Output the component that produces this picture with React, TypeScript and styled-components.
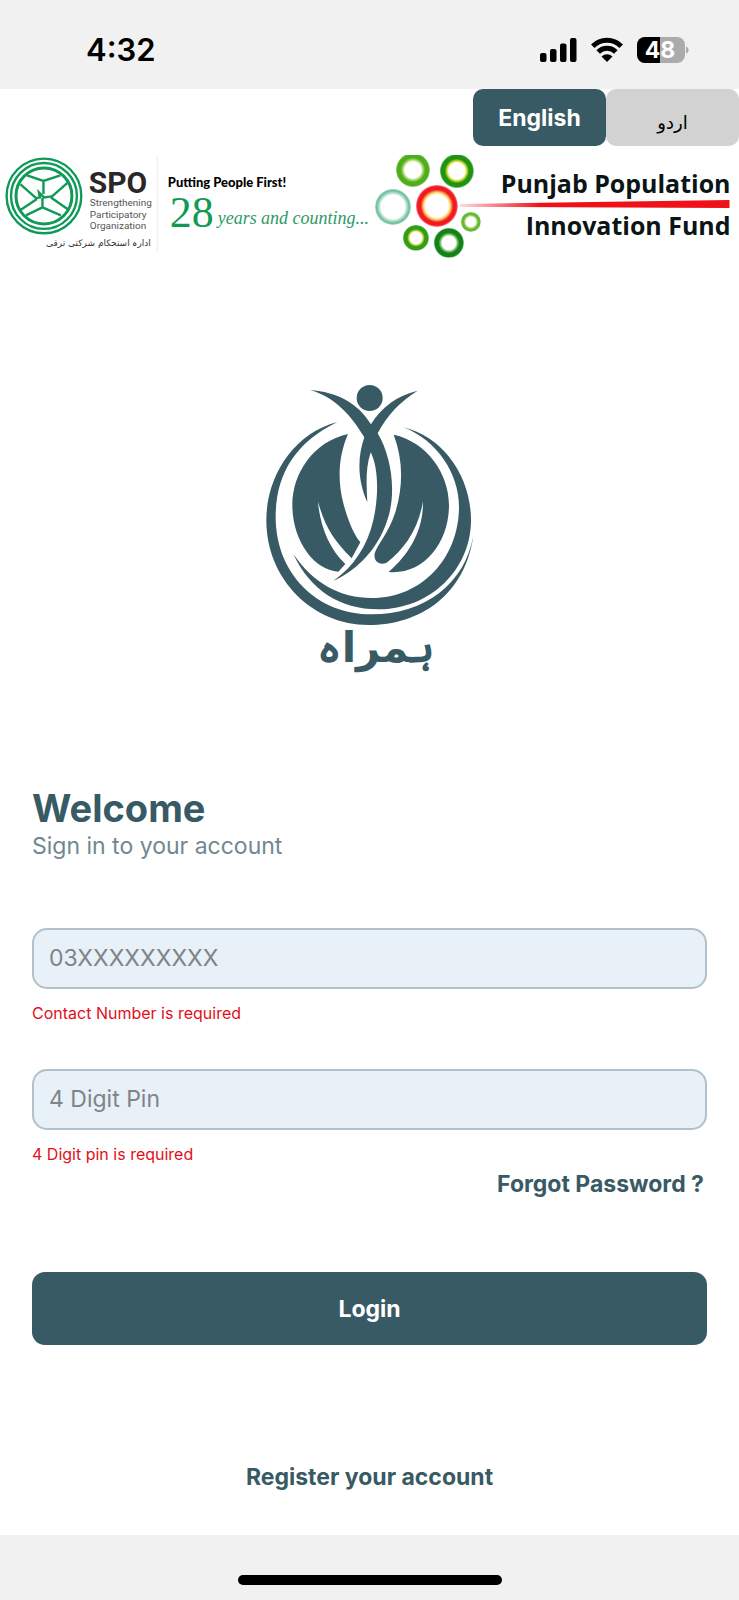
import React, { useState } from "react";
import styled, { createGlobalStyle } from "styled-components";

const teal = "#385a64";
const urduFont = '"DejaVu Sans", sans-serif';

const GlobalStyle = createGlobalStyle`
  *, *::before, *::after { box-sizing: border-box; }
  body {
    margin: 0;
    background: #ffffff;
    font-family: Inter, "Liberation Sans", sans-serif;
    color: ${teal};
  }
  button, input { font-family: inherit; }
`;

const Screen = styled.div`
  min-height: 100vh;
  display: flex;
  flex-direction: column;
`;

const StatusBar = styled.header`
  display: flex;
  align-items: center;
  justify-content: space-between;
  height: 89px;
  padding: 10px 50px 0 86px;
  background: #f1f1f1;
  color: #000000;
`;

const Clock = styled.time`
  font-size: 31px;
  line-height: 40px;
  font-weight: 600;
`;

const StatusIcons = styled.div`
  display: flex;
  align-items: center;
  gap: 14px;
`;

const LanguageTabs = styled.div`
  display: flex;
  justify-content: flex-end;
`;

const LanguageButton = styled.button<{ $active: boolean }>`
  width: 18%;
  height: 57px;
  padding: 0;
  border: 0;
  border-radius: 10px;
  background: ${(p) => (p.$active ? teal : "#d2d2d2")};
  color: ${(p) => (p.$active ? "#ffffff" : "#000000")};
  font-size: 23px;
  font-weight: ${(p) => (p.$active ? 700 : 400)};
  cursor: pointer;

  &:lang(ur) {
    padding-top: 10px;
    font-family: ${urduFont};
    font-size: 18px;
  }
`;

const Partners = styled.div`
  display: flex;
  margin-top: 4px;

  & > svg { flex: 1; min-width: 0; height: auto; }
`;

const EmblemWrap = styled.div`
  display: flex;
  justify-content: center;
  margin-top: 110px;
`;

const Form = styled.form`
  flex: 1;
  display: flex;
  flex-direction: column;
  margin-top: 104px;
  padding: 0 32px 44px;
`;

const Title = styled.h1`
  margin: 0;
  font-size: 38px;
  line-height: 48px;
  font-weight: 700;
`;

const Subtitle = styled.p`
  margin: 0 0 68px;
  font-size: 23px;
  line-height: 28px;
  color: #718890;
`;

const Field = styled.div<{ $last?: boolean }>`
  display: flex;
  flex-direction: column;
  margin-bottom: ${(p) => (p.$last ? 6 : 46)}px;
`;

const TextInput = styled.input`
  width: 100%;
  height: 61px;
  padding: 0 15px;
  border: 2px solid #b1c1c9;
  border-radius: 15px;
  background: #e8f0f8;
  color: ${teal};
  font-size: 23px;
  outline: none;

  &::placeholder { color: #7f8488; opacity: 1; }
`;

const ErrorText = styled.p`
  margin: 14px 0 0;
  font-size: 16px;
  line-height: 20px;
  color: #e20f1a;
`;

const TextLink = styled.a<{ $align: "flex-end" | "center" }>`
  align-self: ${(p) => p.$align};
  padding: 0 3px;
  color: ${teal};
  font-size: 23px;
  line-height: 28px;
  font-weight: 700;
  text-decoration: none;
`;

const LoginButton = styled.button`
  height: 73px;
  margin: 74px 0 118px;
  padding: 2px 0 0;
  border: 0;
  border-radius: 13px;
  background: ${teal};
  color: #ffffff;
  font-size: 23px;
  font-weight: 700;
  cursor: pointer;
`;

const HomeArea = styled.footer`
  display: flex;
  justify-content: center;
  align-items: flex-end;
  height: 65px;
  padding-bottom: 15px;
  background: #f1f1f1;
`;

const HomeIndicator = styled.div`
  width: 264px;
  height: 10px;
  border-radius: 5px;
  background: #000000;
`;

const SignalIcon = () => (
  <svg width="38" height="26" viewBox="0 0 38 26" role="img" aria-label="Signal">
    <rect x="1" y="16" width="6.500" height="9" rx="2" />
    <rect x="11" y="12" width="6.500" height="13" rx="2" />
    <rect x="21" y="6.500" width="6.500" height="18.500" rx="2" />
    <rect x="31" y="1" width="6.500" height="24" rx="2" />
  </svg>
);

const WifiIcon = () => (
  <svg width="32" height="26" viewBox="0 0 32 26" role="img" aria-label="Wi-Fi">
    <g fill="none" stroke="#000" strokeWidth="5">
      <path d="M1.800 9.200a20.200 20.200 0 0 1 28.400 0" />
      <path d="M7.200 15a12.400 12.400 0 0 1 17.600 0" />
    </g>
    <path d="M16 25l-5.500-5.400a7.800 7.800 0 0 1 11 0z" />
  </svg>
);

const BatteryIcon = () => (
  <svg width="52" height="26" viewBox="0 0 52 26" role="img" aria-label="Battery">
    <rect width="48" height="26" rx="8" fill="#ababab" />
    <path d="M23 0v26H8a8 8 0 0 1-8-8V8a8 8 0 0 1 8-8z" fill="#000" />
    <path d="M49 9.500c3.500 1 3.500 6 0 7z" fill="#ababab" />
    <text x="23" y="21" textAnchor="middle" fontFamily="Inter, sans-serif" fontSize="23" fontWeight="700" fill="#fff">
      48
    </text>
  </svg>
);

const SpoLogo = () => (
  <svg viewBox="0 0 370 110" role="img" aria-label="SPO">
    <g fill="none" stroke="#109a57" strokeWidth="2.4">
      <circle cx="44" cy="46" r="37.4" />
      <circle cx="44" cy="46" r="33" />
      <circle cx="44" cy="46" r="28" strokeWidth="3" />
      <path d="M27 25.500l16.500 5.500 17-5.500M43.500 31v13M20.500 34.500L37 49M67.500 33L51 47.500M37 49L19 61M51 47.500L69 60M42.500 48v10M26 65.500l16.500-8 18.500 8" />
      <path d="M35 48.500l5-1-1-5 5 5 8-1" />
    </g>
    <text x="89" y="43" fontFamily='Roboto, "Liberation Sans", sans-serif' fontSize="30" fontWeight="700" fill="#2b2728">SPO</text>
    <g fontFamily='Roboto, "Liberation Sans", sans-serif' fontSize="10" fill="#555">
      <text x="90" y="56">Strengthening</text>
      <text x="90" y="68">Participatory</text>
      <text x="90" y="79">Organization</text>
    </g>
    <text x="151" y="96" direction="rtl" lang="ur" fontFamily={urduFont} fontSize="9" fill="#333">ادارہ استحکام شرکتی ترقی</text>
    <path d="M157.500 5v98" stroke="#ececec" />
    <text x="168" y="37" fontFamily="Lato, sans-serif" fontSize="13" fontWeight="900" fill="#000">Putting People First!</text>
    <text x="170" y="77" fontFamily='"Liberation Serif", serif' fontSize="44" fill="#109a57">28</text>
    <text x="218" y="74" fontFamily='"Liberation Serif", serif' fontSize="18" fontStyle="italic" fill="#2d9a66">years and counting...</text>
  </svg>
);

type RingProps = { id: string; hole: number; inner: string; outer: string };

const RingGradient = ({ id, hole, inner, outer }: RingProps) => (
  <radialGradient id={id}>
    <stop offset={hole - 0.1} stopColor="#fff" />
    <stop offset={hole} stopColor={inner} />
    <stop offset={hole + 0.14} stopColor={outer} />
    <stop offset="0.92" stopColor={outer} />
    <stop offset="1" stopColor={outer} stopOpacity="0.5" />
  </radialGradient>
);

const PpifLogo = () => (
  <svg viewBox="0 0 370 110" role="img" aria-label="Punjab Population Innovation Fund">
    <defs>
      <RingGradient id="lime" hole={0.58} inner="#b5dc7c" outer="#4fae1c" />
      <RingGradient id="green" hole={0.58} inner="#d5dc3a" outer="#1f9410" />
      <RingGradient id="mint" hole={0.76} inner="#bfe3d2" outer="#6cc09c" />
      <RingGradient id="red" hole={0.64} inner="#ffd668" outer="#f21a22" />
      <RingGradient id="small" hole={0.58} inner="#c9e7a0" outer="#66ba34" />
      <RingGradient id="olive" hole={0.54} inner="#e2dc44" outer="#2f9e18" />
      <RingGradient id="dark" hole={0.56} inner="#8cc66c" outer="#12821a" />
      <linearGradient id="swoosh">
        <stop offset="0" stopColor="#f01018" stopOpacity="0.15" />
        <stop offset="0.3" stopColor="#f01018" />
      </linearGradient>
      <clipPath id="frame">
        <rect y="5" width="370" height="105" />
      </clipPath>
    </defs>
    <g clipPath="url(#frame)">
      <circle cx="43" cy="20" r="17" fill="url(#lime)" />
      <circle cx="87" cy="21" r="17" fill="url(#green)" />
      <circle cx="23" cy="57" r="18" fill="url(#mint)" />
      <circle cx="67" cy="56" r="21" fill="url(#red)" />
      <circle cx="101" cy="72" r="10" fill="url(#small)" />
      <circle cx="46" cy="88" r="13" fill="url(#olive)" />
      <circle cx="79" cy="93" r="15" fill="url(#dark)" />
    </g>
    <path d="M90 54L360 50v8L90 57z" fill="url(#swoosh)" />
    <g fontFamily='"Open Sans", sans-serif' fontSize="25" fontWeight="700" fill="#0b1416" textAnchor="end">
      <text x="361" y="43">Punjab Population</text>
      <text x="361" y="85">Innovation Fund</text>
    </g>
  </svg>
);

const Emblem = () => (
  <svg width="240" height="310" viewBox="0 0 720 930" fill={teal} role="img" aria-label="ہمراہ">
    <circle cx="359" cy="84" r="39" />
    <path d="M180 60C260 66 323 98 363 163C395 110 440 78 503 62C450 95 412 135 383 190C425 260 440 370 412 450C385 535 325 598 250 633C310 590 352 530 370 450C388 370 384 290 362 247C345 300 350 350 352 397C322 330 322 262 343 202C300 130 250 80 180 60Z" />
    <path d="M294 192C265 260 262 330 280 400C295 455 310 490 331 517L305 565C250 510 225 470 204 395C210 470 240 540 286 582L265 605C190 600 127 510 127 405C127 310 190 215 294 192Z" />
    <path d="M431 194C460 270 460 350 435 430C415 490 385 520 374 550C370 575 388 587 410 578C460 540 505 480 519 394C520 480 480 550 416 606C520 615 597 520 597 405C597 310 530 215 431 194Z" />
    <path d="M262 156C130 190 49 320 49 450C49 630 190 765 355 765C510 765 645 675 670 497C645 640 525 733 365 733C200 733 77 610 77 440C77 320 130 220 262 156Z" />
    <path d="M460 172C580 200 663 320 663 450C663 600 540 718 385 718C270 718 180 660 130 552C190 640 270 684 365 684C520 684 627 560 627 410C627 310 560 210 460 172Z" />
    <text x="378" y="876" textAnchor="middle" direction="rtl" lang="ur" fontFamily={urduFont} fontSize="126" fontWeight="700">ہمراہ</text>
  </svg>
);

export default function App() {
  const [language, setLanguage] = useState<"en" | "ur">("en");
  return (
    <>
      <GlobalStyle />
      <Screen>
        <StatusBar>
          <Clock>4:32</Clock>
          <StatusIcons>
            <SignalIcon />
            <WifiIcon />
            <BatteryIcon />
          </StatusIcons>
        </StatusBar>
        <LanguageTabs>
          <LanguageButton type="button" $active={language === "en"} onClick={() => setLanguage("en")}>
            English
          </LanguageButton>
          <LanguageButton type="button" lang="ur" $active={language === "ur"} onClick={() => setLanguage("ur")}>
            اردو
          </LanguageButton>
        </LanguageTabs>
        <Partners>
          <SpoLogo />
          <PpifLogo />
        </Partners>
        <EmblemWrap>
          <Emblem />
        </EmblemWrap>
        <Form onSubmit={(e) => e.preventDefault()}>
          <Title>Welcome</Title>
          <Subtitle>Sign in to your account</Subtitle>
          <Field>
            <TextInput type="tel" placeholder="03XXXXXXXXX" aria-label="Contact Number" aria-describedby="contact-error" />
            <ErrorText id="contact-error">Contact Number is required</ErrorText>
          </Field>
          <Field $last>
            <TextInput type="password" placeholder="4 Digit Pin" aria-label="4 Digit Pin" aria-describedby="pin-error" />
            <ErrorText id="pin-error">4 Digit pin is required</ErrorText>
          </Field>
          <TextLink href="#forgot" $align="flex-end">Forgot Password ?</TextLink>
          <LoginButton type="submit">Login</LoginButton>
          <TextLink href="#register" $align="center">Register your account</TextLink>
        </Form>
        <HomeArea>
          <HomeIndicator />
        </HomeArea>
      </Screen>
    </>
  );
}
